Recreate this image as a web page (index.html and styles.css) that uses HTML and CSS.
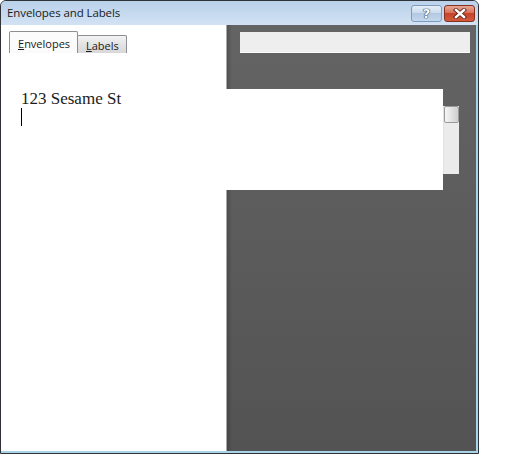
FILE: index.html
```html
<!DOCTYPE html>
<html>
<head>
<meta charset="utf-8">
<title>Envelopes and Labels</title>
<link rel="stylesheet" href="styles.css">
</head>
<body>
<div class="window">
  <div class="titlebar">
    <span class="title">Envelopes and Labels</span>
    <div class="caption-buttons">
      <div class="cbtn help">?</div>
      <div class="cbtn close">
        <svg width="14" height="11" viewBox="0 0 14 11">
          <path d="M3 2 L11 9 M11 2 L3 9" stroke="#5b2418" stroke-width="4.2" stroke-linecap="square"/>
          <path d="M3 2 L11 9 M11 2 L3 9" stroke="#ffffff" stroke-width="2.4" stroke-linecap="square"/>
        </svg>
      </div>
    </div>
  </div>
  <div class="client">
    <div class="tabrow">
      <div class="tab selected"><u>E</u>nvelopes</div>
      <div class="tab"><u>L</u>abels</div>
      <div class="band"></div>
    </div>
    <div class="editrow">
      <div class="textbox">
        <div class="line">123 Sesame St</div>
        <div class="caret"></div>
      </div>
      <div class="vscroll">
        <div class="thumb"></div>
      </div>
    </div>
  </div>
</div>
</body>
</html>
```
FILE: styles.css
```css
html, body {
  margin: 0;
  padding: 0;
  background: #ffffff;
}

.window {
  width: 477px;
  height: 452px;
  border: 1px solid #2f3338;
  border-radius: 6px 6px 0 0;
  background: #a9d3e8;
  display: flex;
  flex-direction: column;
  overflow: hidden;
}

.titlebar {
  height: 24px;
  flex: none;
  display: flex;
  align-items: flex-start;
  background: linear-gradient(#b9d1ea, #d2e2f3);
  font-family: "Open Sans", "Noto Sans", sans-serif;
  font-size: 11.5px;
  color: #1a1a1a;
}

.title {
  padding-left: 6px;
  line-height: 24px;
  letter-spacing: -0.1px;
}

.caption-buttons {
  margin-left: auto;
  margin-right: 3px;
  margin-top: 4px;
  display: flex;
  gap: 2px;
}

.cbtn {
  width: 29px;
  height: 15px;
  border-radius: 3px;
  display: flex;
  align-items: center;
  justify-content: center;
}

.help {
  border: 1px solid #7f9bbb;
  background: linear-gradient(#e4eef8 0%, #cbdcee 45%, #b3c9e2 50%, #c3d7ec 100%);
  color: #ffffff;
  font-family: "DejaVu Sans", sans-serif;
  font-weight: bold;
  font-size: 13px;
  line-height: 15px;
  text-shadow: 0 0 1px #2d3e55, 0 0 1px #2d3e55, 0 0 1px #2d3e55;
}

.close {
  border: 1px solid #84311f;
  background: linear-gradient(#e8a897 0%, #d8735a 45%, #c8432a 50%, #d35a3b 100%);
}

.client {
  flex: 1;
  margin: 0 2px 2px 0;
  display: flex;
  flex-direction: column;
  background:
    linear-gradient(to right, #ffffff 225px, #a8a8a8 225px, #a8a8a8 226px, transparent 226px),
    linear-gradient(to right, transparent 226px, rgba(0,0,0,0.18) 226px, rgba(0,0,0,0) 231px),
    linear-gradient(#646464, #535353);
}

.tabrow {
  margin-top: 6px;
  height: 22px;
  display: flex;
  align-items: flex-end;
  font-family: "Open Sans", "Noto Sans", sans-serif;
  font-size: 11px;
  color: #1a1a1a;
}

.tab {
  box-sizing: border-box;
  height: 18px;
  width: 50px;
  border: 1px solid #8c8e94;
  border-bottom: none;
  border-radius: 2px 2px 0 0;
  background: linear-gradient(#f3f3f3, #e3e3e3 50%, #d8d8d8);
  padding-left: 8px;
  line-height: 19px;
}

.tab.selected {
  margin-left: 8px;
  width: 69px;
  height: 22px;
  background: #fbfbfb;
  line-height: 23px;
  margin-right: -1px;
  position: relative;
  z-index: 1;
}

.tab u {
  text-decoration-thickness: 1px;
  text-underline-offset: 1px;
}

.band {
  margin-left: auto;
  margin-right: 6px;
  width: 230px;
  height: 21px;
  background: #eeeeee;
  border-bottom: 1px solid #fafafa;
  box-sizing: border-box;
}

.editrow {
  margin-top: 36px;
  display: flex;
  align-items: flex-start;
}

.textbox {
  margin-left: 13px;
  width: 429px;
  height: 101px;
  box-sizing: border-box;
  background: #ffffff;
  padding-left: 7px;
}

.line {
  font-family: "Liberation Serif", "Times New Roman", serif;
  font-size: 17px;
  line-height: 20px;
  color: #1c1c1c;
}

.caret {
  margin-top: -1px;
  width: 1px;
  height: 18px;
  background: #000000;
}

.vscroll {
  margin-top: 17px;
  width: 16px;
  height: 68px;
  box-sizing: border-box;
  background: #ebebeb;
  border-left: 1px solid #e2e2e2;
  padding: 0;
}

.thumb {
  height: 17px;
  box-sizing: border-box;
  border: 1px solid #9a9a9a;
  border-radius: 2px;
  background: linear-gradient(to right, #f6f6f6, #dedede 60%, #cfcfcf);
}
```
